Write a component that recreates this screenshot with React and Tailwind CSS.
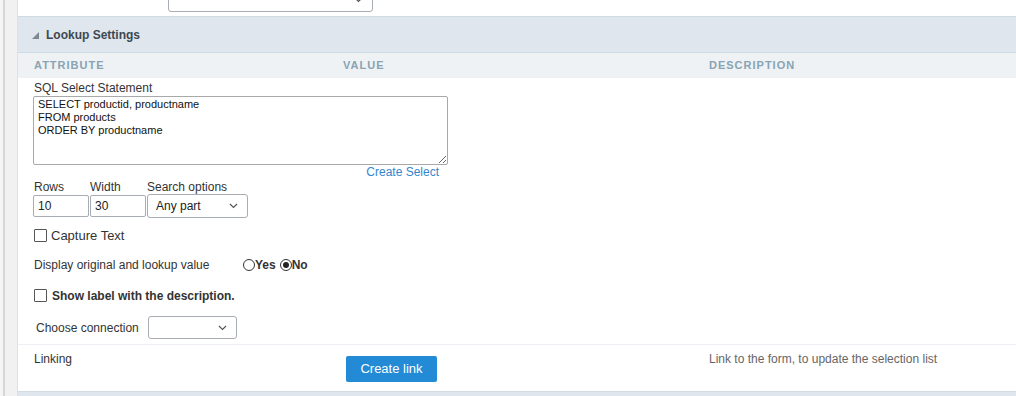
import React from "react";

function Chevron() {
  return (
    <svg width="9" height="6" viewBox="0 0 9 6" className="absolute right-[9px] top-1/2 -translate-y-1/2">
      <path d="M1 1l3.5 3.5L8 1" fill="none" stroke="#555" strokeWidth="1.2" />
    </svg>
  );
}

function FakeSelect({ className, value }) {
  return (
    <div className={`relative bg-white border border-[#a8adb3] rounded-[3px] text-[12px] text-[#222] flex items-center pl-[8px] ${className}`}>
      {value}
      <Chevron />
    </div>
  );
}

function Checkbox() {
  return <span className="inline-block w-[13px] h-[13px] border border-[#555] bg-white rounded-[1px]" />;
}

function Radio({ checked }) {
  return (
    <span className="inline-flex items-center justify-center w-[12px] h-[12px] rounded-full border border-[#333] bg-white">
      {checked && <span className="w-[6px] h-[6px] rounded-full bg-[#222]" />}
    </span>
  );
}

export default function App() {
  return (
    <div className="flex h-[396px] w-[1016px] overflow-hidden bg-white text-[#333]" style={{ fontFamily: '"Liberation Sans", Arial, sans-serif' }}>
      {/* left gutter */}
      <div className="flex w-[18px] shrink-0 bg-[#f1f1f1]">
        <div className="w-[3px] bg-[#f5f5f5]" />
        <div className="w-[2px] bg-[#d6d6d6]" />
        <div className="flex-1" />
        <div className="w-px bg-[#dbe2e9]" />
      </div>

      <div className="flex flex-1 flex-col">
        {/* cut-off select from previous section */}
        <div className="h-[16px] shrink-0 overflow-hidden">
          <FakeSelect className="ml-[150px] -mt-[12px] h-[24px] w-[205px]" value="" />
        </div>

        {/* section header */}
        <div className="h-[37px] shrink-0 border-y border-[#cfdbe2] bg-[#dfe6ed] flex items-center pl-[14px]">
          <svg width="7" height="7" viewBox="0 0 7 7" className="mr-[7px] mt-[1px]">
            <polygon points="7,0 7,7 0,7" fill="#7d8891" />
          </svg>
          <span className="text-[12px] font-bold text-[#3d4852]">Lookup Settings</span>
        </div>

        {/* column headers */}
        <div className="h-[25px] shrink-0 bg-[#eef2f5] grid grid-cols-[309px_366px_1fr] px-[16px] items-center text-[11px] font-bold tracking-[1px] text-[#89a3b2]">
          <span>ATTRIBUTE</span>
          <span>VALUE</span>
          <span>DESCRIPTION</span>
        </div>

        {/* body */}
        <div className="flex flex-col pl-[15px] text-[12px]">
          <div className="mt-[3px] leading-[14px] pl-px">SQL Select Statement</div>
          <textarea
            readOnly
            defaultValue={"SELECT productid, productname\nFROM products\nORDER BY productname"}
            className="mt-px h-[69px] w-[415px] border border-[#a9a9a9] rounded-[2px] px-[4px] pt-[1px] text-[11px] leading-[13px] text-[#111] outline-none"
            style={{ fontFamily: '"Liberation Sans", Arial, sans-serif' }}
          />
          <div className="w-[415px] pr-[9px] text-right leading-[14px] text-[#3486cf]">Create Select</div>

          <div className="mt-px flex gap-px">
            <div className="flex flex-col w-[56px]">
              <span className="leading-[14px] pl-px">Rows</span>
              <div className="mt-px h-[22px] border border-[#a8adb3] rounded-[2px] bg-white pl-[4px] flex items-center text-[#222]">10</div>
            </div>
            <div className="flex flex-col w-[56px]">
              <span className="leading-[14px]">Width</span>
              <div className="mt-px h-[22px] border border-[#a8adb3] rounded-[2px] bg-white pl-[4px] flex items-center text-[#222]">30</div>
            </div>
            <div className="flex flex-col w-[101px]">
              <span className="leading-[14px]">Search options</span>
              <FakeSelect className="h-[24px]" value="Any part" />
            </div>
          </div>

          <div className="mt-[11px] flex items-center h-[13px] gap-[4px] pl-px">
            <Checkbox />
            <span className="text-[13px] text-[#333]">Capture Text</span>
          </div>

          <div className="mt-[16px] flex items-center h-[14px] pl-px">
            <span className="w-[209px]">Display original and lookup value</span>
            <Radio />
            <span className="text-[12px] font-bold text-[#333]">Yes</span>
            <span className="ml-[4px] inline-flex"><Radio checked /></span>
            <span className="text-[12px] font-bold text-[#333]">No</span>
          </div>

          <div className="mt-[17px] flex items-center h-[13px] gap-[5px] pl-px">
            <Checkbox />
            <span className="font-bold text-[#333]">Show label with the description.</span>
          </div>

          <div className="mt-[14px] flex items-center pl-[3px]">
            <span className="w-[112px]">Choose connection</span>
            <FakeSelect className="h-[23px] w-[89px]" value="" />
          </div>
        </div>

        <div className="mt-[5px] h-px bg-[#edf1f5]" />

        <div className="flex-1 grid grid-cols-[309px_366px_1fr] pl-[16px] pt-[7px] items-start text-[12px]">
          <span className="leading-[14px]">Linking</span>
          <button className="ml-[3px] mt-[4px] h-[26px] w-[91px] rounded-[2px] bg-[#238ad6] text-[13px] text-white">Create link</button>
          <span className="leading-[14px] text-[#666]">Link to the form, to update the selection list</span>
        </div>

        <div className="h-[5px] shrink-0 border-t border-[#d3dce3] bg-[#dfe6ed]" />
      </div>
    </div>
  );
}
